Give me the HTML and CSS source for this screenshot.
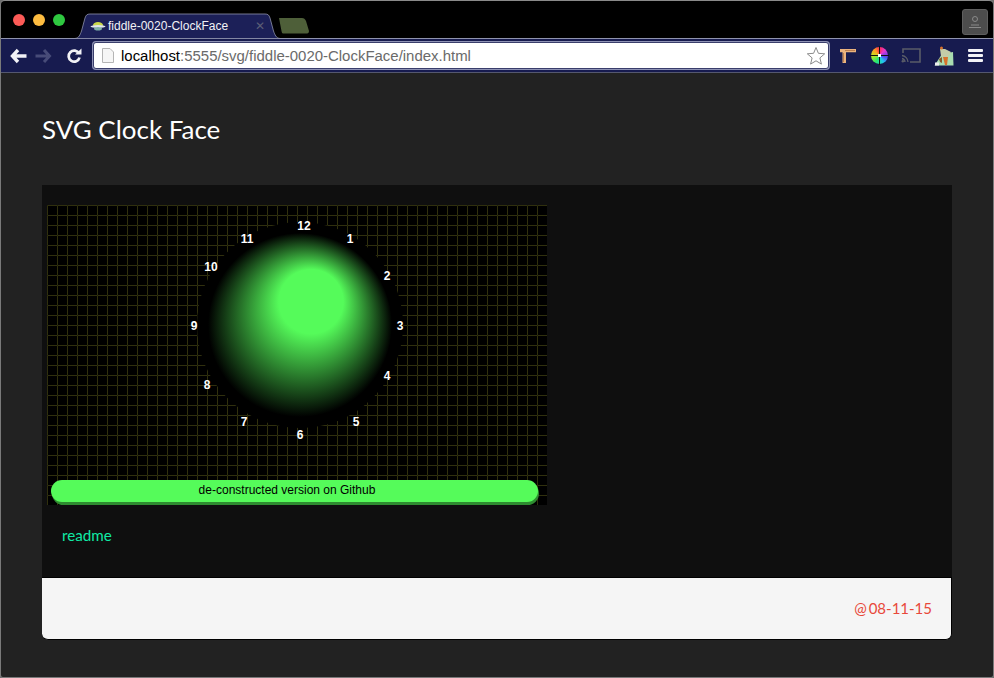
FILE: index.html
```html
<!DOCTYPE html>
<html lang="en">
<head>
<meta charset="utf-8">
<title>SVG Clock Face</title>
<link rel="stylesheet" href="styles.css">
</head>
<body>
<div class="window">
  <div class="titlebar">
    <div class="lights"><span class="light red"></span><span class="light yellow"></span><span class="light green"></span></div>
    <div class="tab">
      <svg class="tab-shape" width="205" height="26" viewBox="0 0 205 26"><path d="M0 25.500 C4 25 5 22 6.500 18 L10 5 C11 2 12 1 15 1 L190 1 C193 1 194 2 195 5 L198.500 18 C200 22 201 25 205 25.500 Z" fill="#1c2058" stroke="#8f93ad" stroke-width="0.800"/></svg>
      <svg class="favicon" width="16" height="9" viewBox="0 0 16 9"><ellipse cx="8" cy="3" rx="5" ry="3" fill="#c9d84a"/><ellipse cx="8" cy="4.500" rx="7.500" ry="1.500" fill="#dfe6ee"/><ellipse cx="8" cy="6.800" rx="4" ry="1.800" fill="#7fb0a8"/></svg>
      <span class="tab-title">fiddle-0020-ClockFace</span>
      <span class="tab-close">✕</span>
    </div>
    <svg class="new-tab" width="32" height="18" viewBox="0 0 32 18"><path d="M1 1 L24 1 C26 1 27 2 28 4 L31 14 C31 16 30 16.500 28 16.500 L6 16.500 C4 16.500 4 16 3.500 14 Z" fill="#4e5f39"/></svg>
    <div class="profile"><svg width="14" height="14" viewBox="0 0 14 14"><circle cx="7" cy="4" r="2.500" fill="none" stroke="#8a8a8a"/><path d="M1 12.500 H13 M3 10 H11" stroke="#8a8a8a"/></svg></div>
  </div>
  <div class="toolbar">
    <div class="nav">
      <svg width="18" height="16" viewBox="0 0 18 16"><path d="M8 2 L2.500 8 L8 14 M3 8 H16.500" fill="none" stroke="#f2f2f6" stroke-width="3.400"/></svg>
      <svg width="18" height="16" viewBox="0 0 18 16"><path d="M10 2 L15.500 8 L10 14 M15 8 H1.500" fill="none" stroke="#474b78" stroke-width="3"/></svg>
      <svg width="16" height="16" viewBox="0 0 16 16"><path d="M13 5.500 A5.500 5.500 0 1 0 13.500 9.500" fill="none" stroke="#f2f2f6" stroke-width="2.800"/><path d="M9 6.500 L15.500 6.500 L15.500 0.500 Z" fill="#f2f2f6"/></svg>
    </div>
    <div class="omnibox">
      <svg class="page-icon" width="12" height="15" viewBox="0 0 12 15"><path d="M0.500 0.500 H8 L11.500 4 V14.500 H0.500 Z" fill="#f6f6f6" stroke="#b5b5b5"/></svg>
      <span class="url"><span class="host">localhost</span>:5555/svg/fiddle-0020-ClockFace/index.html</span>
      <svg class="star" width="20" height="20" viewBox="0 0 20 20"><path d="M10 1.500 L12.400 7.300 L18.700 7.800 L13.900 11.900 L15.400 18.100 L10 14.800 L4.600 18.100 L6.100 11.900 L1.300 7.800 L7.600 7.300 Z" fill="#fff" stroke="#8b8b8b"/></svg>
    </div>
    <div class="extensions">
      <svg width="16" height="15" viewBox="0 0 16 15"><path d="M0 1 H16 V4.200 H6 V15 H2.500 V4.200 H0 Z" fill="#eab37e"/><path d="M3.500 5 V14 M5 2.500 H15" stroke="#a8683c" stroke-width="0.700"/></svg>
      <div class="wheel"><span class="wheel-h"></span><span class="wheel-v"></span><span class="wheel-dot"></span></div>
      <svg width="20" height="15" viewBox="0 0 20 15"><path d="M2 5 V1 H19 V14 H9" fill="none" stroke="#5a5c68" stroke-width="1.600"/><path d="M1 7.500 A7 7 0 0 1 7 14 M1 10.500 A4 4 0 0 1 4 14" fill="none" stroke="#5a5c68" stroke-width="1.400"/><circle cx="1.800" cy="13.200" r="1.200" fill="#5a5c68"/></svg>
      <svg width="20" height="20" viewBox="0 0 20 20"><path d="M0.500 19.500 L8 8 L19 6 L19.500 19.500 Z" fill="#a9dcb0"/><path d="M6 3 L11 3 L17 6 L14 11 L10 13 L7 10 Z" fill="#c4cca8"/><circle cx="7.500" cy="2" r="1.500" fill="#d8722c"/><path d="M9 11 L14 11 L13 19 L11 19 Z" fill="#d8722c"/><path d="M5 13 L8 11 L8 17 L6 16 Z" fill="#8a5a2c"/><path d="M1 16.500 H5 V19.500 H1 Z" fill="#eee"/></svg>
      <div class="menu"><span></span><span></span><span></span></div>
    </div>
  </div>
  <main class="page">
    <h1 class="title">SVG Clock Face</h1>
    <section class="card">
      <div class="card-body">
        <svg class="clock" width="500" height="300" viewBox="0 0 500 300">
          <defs>
            <pattern id="grid" width="10" height="10" patternUnits="userSpaceOnUse"><path d="M10 0.500 H0.500 V10" fill="none" stroke="#30300e" stroke-width="1"/></pattern>
            <radialGradient id="ball" gradientUnits="userSpaceOnUse" cx="253" cy="120" r="92" fx="270" fy="84">
              <stop offset="0.350" stop-color="#55fb5a"/>
              <stop offset="1" stop-color="#000"/>
            </radialGradient>
          </defs>
          <rect width="500" height="300" fill="#000"/>
          <rect width="500" height="300" fill="url(#grid)"/>
          <circle cx="253" cy="120" r="103" fill="#000"/>
          <circle cx="253" cy="120" r="92" fill="url(#ball)"/>
          <g class="numerals">
            <text x="257" y="25">12</text>
            <text x="303" y="38">1</text>
            <text x="340" y="75">2</text>
            <text x="353" y="125">3</text>
            <text x="340" y="175">4</text>
            <text x="309" y="221">5</text>
            <text x="253" y="234">6</text>
            <text x="197" y="221">7</text>
            <text x="160" y="184">8</text>
            <text x="147" y="125">9</text>
            <text x="164" y="66">10</text>
            <text x="200" y="38">11</text>
          </g>
          <rect x="5" y="277" width="487" height="23" rx="11.500" fill="#2e8c30"/>
          <rect x="4" y="275" width="487" height="22" rx="11" fill="#55fb5a"/>
          <text class="banner" x="240" y="289">de-constructed version on Github</text>
        </svg>
        <a class="readme" href="#">readme</a>
      </div>
      <footer class="card-footer"><span class="date">@ 08-11-15</span></footer>
    </section>
  </main>
</div>
</body>
</html>
```
FILE: styles.css
```css
* { box-sizing: border-box; }
html, body { margin: 0; padding: 0; height: 100%; background: #6e6e6e; }
body { overflow: hidden; }
.window {
  width: 994px;
  height: 678px;
  display: flex;
  flex-direction: column;
  border-radius: 5px 5px 3px 3px;
  overflow: hidden;
  border: 1px solid #7a7a7a;
  border-top-color: #8a8a8a;
}
.titlebar {
  height: 37px;
  flex: none;
  background: #000;
  display: flex;
  align-items: flex-end;
  position: relative;
}
.lights { display: flex; gap: 8px; margin: 0 0 12px 12px; align-self: flex-end; }
.light { width: 12px; height: 12px; border-radius: 50%; }
.red { background: #fc5b57; }
.yellow { background: #fdbc40; }
.green { background: #2fc840; }
.tab {
  width: 205px;
  height: 26px;
  margin-left: 10px;
  margin-bottom: -1px;
  position: relative;
  display: flex;
  align-items: center;
  padding: 0 0 0 15px;
  z-index: 1;
  flex: none;
}
.tab-shape { position: absolute; left: 0; top: 0; }
.favicon { position: relative; flex: none; }
.tab-title {
  position: relative;
  margin-left: 2px;
  font: 12px "Liberation Sans", Arial, sans-serif;
  color: #f2f2f6;
  white-space: nowrap;
}
.tab-close {
  position: relative;
  margin-left: 27px;
  color: #5b5e76;
  font: bold 12px "DejaVu Sans", sans-serif;
}
.new-tab { margin: 0 0 3px -2px; }
.profile {
  width: 26px;
  height: 26px;
  margin: 0 5px 3px auto;
  background: #4d4d4d;
  border: 1px solid #5f5f5f;
  border-radius: 3px;
  display: flex;
  align-items: center;
  justify-content: center;
}
.toolbar {
  height: 35px;
  flex: none;
  background: #171b4f;
  border-top: 1px solid #8f93ad;
  border-bottom: 1px solid #55586f;
  display: flex;
  align-items: center;
}
.nav { display: flex; align-items: center; gap: 6px; width: 92px; padding-left: 9px; flex: none; }
.nav svg:last-child { margin-left: 8px; }
.omnibox {
  width: 736px;
  height: 27px;
  background: #fff;
  border: 1px solid #3a3e6c;
  border-radius: 3px;
  box-shadow: 0 0 0 1px #8f93b5;
  display: flex;
  align-items: center;
  padding: 0 2px 0 8px;
  flex: none;
}
.page-icon { flex: none; }
.url {
  margin-left: 7px;
  font: 14.960px "Liberation Sans", Arial, sans-serif;
  color: #6a6a6a;
  white-space: nowrap;
}
.host { color: #000; }
.star { margin-left: auto; }
.extensions { display: flex; align-items: center; gap: 13px; margin-left: 11px; }
.wheel {
  width: 17px;
  height: 17px;
  border-radius: 50%;
  position: relative;
  margin-left: 2px;
  background: conic-gradient(#ff2a55, #e838d0 45deg, #5a40f0 100deg, #20c8f0 150deg, #28e868 210deg, #c8e820 270deg, #ff9a20 320deg, #ff2a55);
}
.wheel-h, .wheel-v, .wheel-dot { position: absolute; display: block; }
.wheel-h { left: -1px; right: -1px; top: 8px; height: 1px; background: #111; }
.wheel-v { top: -1px; bottom: -1px; left: 8px; width: 1px; background: #111; }
.wheel-dot { left: 7px; top: 7px; width: 3px; height: 3px; background: #fff; }
.menu { display: flex; flex-direction: column; gap: 2px; margin-left: 1px; }
.menu span { display: block; width: 15px; height: 3px; border-radius: 1px; background: #f2f2f6; }
.page {
  flex: 1;
  background: #222;
  padding: 37px 41px 0;
  min-height: 0;
}
.title {
  margin: 0 0 37px;
  font: 400 25.950px/38px Lato, sans-serif;
  color: #fff;
}
.card {
  height: 455px;
  display: flex;
  flex-direction: column;
  border-radius: 0 0 6px 6px;
  overflow: hidden;
  background: #0f0f0f;
}
.card-body {
  flex: 1;
  padding: 20px 5px 0;
  background: #0f0f0f;
}
.clock { display: block; }
.numerals text {
  font: bold 12px "Liberation Sans", Arial, sans-serif;
  fill: #fff;
  text-anchor: middle;
}
.banner {
  font: 12px "Liberation Sans", Arial, sans-serif;
  fill: #000;
  text-anchor: middle;
}
.readme {
  display: block;
  margin: 21px 0 0 15px;
  font: 15.200px/18px Lato, sans-serif;
  color: #10eaa5;
  text-decoration: none;
}
.card-footer {
  height: 63px;
  flex: none;
  background: #f5f5f5;
  border: 1px solid #000;
  border-left: 0;
  border-radius: 0 0 6px 6px;
  display: flex;
  align-items: center;
  justify-content: flex-end;
  padding: 0 19px 2px 0;
}
.date { font: 15px Lato, sans-serif; color: #e8483a; word-spacing: -2px; }
```
